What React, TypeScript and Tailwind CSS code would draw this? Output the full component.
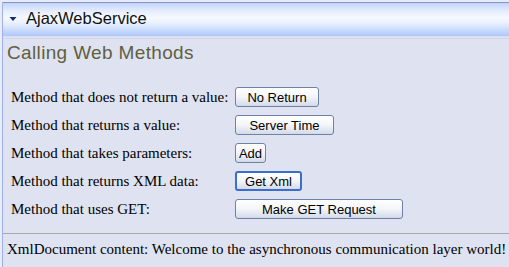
import React from "react";

const rows: { label: string; btn: string; w: number; focus?: boolean }[] = [
  { label: "Method that does not return a value:", btn: "No Return", w: 84 },
  { label: "Method that returns a value:", btn: "Server Time", w: 99 },
  { label: "Method that takes parameters:", btn: "Add", w: 31 },
  { label: "Method that returns XML data:", btn: "Get Xml", w: 67, focus: true },
  { label: "Method that uses GET:", btn: "Make GET Request", w: 168 },
];

export default function App() {
  return (
    <div className="w-[509px] h-[267px] overflow-hidden bg-[#e8ecf8] pt-[2px] pl-[2px]">
      <div className="h-full border-l border-[#a2b0e8] bg-[#dfe3f1]">
        <div className="h-[34px] border-t border-[#8a92c6] bg-[linear-gradient(to_bottom,#c2d4fb_0%,#e6eefe_25%,#f6f9ff_45%,#e4edfe_65%,#aec7fa_100%)] flex items-center pl-[6px] pb-[2px]">
          <svg width="8" height="6" viewBox="0 0 8 6" className="mr-[9px] mt-[1px]">
            <polygon points="0.5,1 7.5,1 4,5" fill="#1a2a6c" />
          </svg>
          <span className="font-['Liberation_Sans',Arial,sans-serif] text-[16.5px] text-[#101010] leading-none">
            AjaxWebService
          </span>
        </div>
        <div className="h-[3px] border-t border-[#d8ddf1] border-b border-b-[#d2d6e6]" />
        <div className="pl-[4px] pt-[1px] font-['Liberation_Sans',Arial,sans-serif] text-[19px] tracking-[0.35px] text-[#605f3f] leading-[26px]">
          Calling Web Methods
        </div>
        <div className="mt-[17px] pl-[8px] grid grid-cols-[224px_auto]">
          {rows.map((r) => (
            <React.Fragment key={r.label}>
              <div className="h-[28px] flex items-center font-['Liberation_Serif','Times_New_Roman',serif] text-[15px] text-black">
                {r.label}
              </div>
              <div className="h-[28px] flex items-center">
                <button
                  style={{ width: r.w }}
                  className={
                    r.focus
                      ? "h-[20px] rounded-[3px] border-2 border-[#3c6ed0] bg-[linear-gradient(to_bottom,#ffffff_0%,#f3f5f9_50%,#d3dae8_100%)] font-['Liberation_Sans',Arial,sans-serif] text-[13px] text-black leading-none flex items-center justify-center"
                      : "h-[20px] rounded-[3px] border border-[#6f82a6] bg-[linear-gradient(to_bottom,#ffffff_0%,#f3f5f9_50%,#d3dae8_100%)] font-['Liberation_Sans',Arial,sans-serif] text-[13px] text-black leading-none flex items-center justify-center"
                  }
                >
                  {r.btn}
                </button>
              </div>
            </React.Fragment>
          ))}
        </div>
        <div className="mt-[10px] border-t border-[#a6a8b2]" />
        <div className="pl-[4px] pt-[5px] font-['Liberation_Serif','Times_New_Roman',serif] text-[15px] text-black leading-[20px]">
          XmlDocument content: Welcome to the asynchronous communication layer world!
        </div>
      </div>
    </div>
  );
}
